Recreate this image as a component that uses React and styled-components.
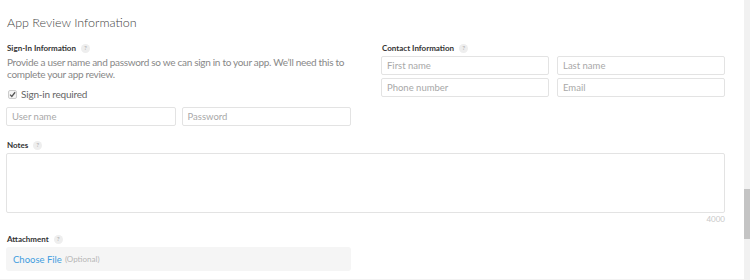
import React from "react";
import styled, { createGlobalStyle } from "styled-components";

const Global = createGlobalStyle`
  html, body { margin: 0; padding: 0; background: #fff; }
  body { font-family: "Lato", "Liberation Sans", sans-serif; }
  * { box-sizing: border-box; }
`;

const Page = styled.div`
  display: flex;
  width: 750px;
  height: 280px;
  overflow: hidden;
`;

const Content = styled.div`
  flex: 1;
  padding: 13px 19px 0 6px;
  border-bottom: 1px solid #f2f2f2;
`;

const Track = styled.div`
  width: 6px;
  background: #f1f1f1;
  padding-top: 189px;
`;

const Thumb = styled.div`
  height: 50px;
  background: #c4c4c4;
`;

const Heading = styled.h2`
  margin: 0 0 0 1px;
  font-size: 12.5px;
  line-height: 20px;
  font-weight: 300;
  color: #444;
`;

const Columns = styled.div`
  display: grid;
  grid-template-columns: 345px 344px;
  column-gap: 30px;
  margin-top: 9px;
`;

const Col = styled.div`
  display: flex;
  flex-direction: column;
`;

const Label = styled.div`
  display: flex;
  align-items: center;
  gap: 5px;
  margin-left: 1px;
  font-size: 8px;
  line-height: 12px;
  font-weight: 700;
  color: #333;
`;

const Help = styled.span`
  display: inline-flex;
  align-items: center;
  justify-content: center;
  width: 9px;
  height: 9px;
  border-radius: 50%;
  background: #eee;
  color: #aaa;
  font-size: 6.5px;
  font-weight: 400;
`;

const Desc = styled.p`
  margin: 2px 0 0 1px;
  font-size: 10px;
  letter-spacing: -0.3px;
  line-height: 12px;
  color: #888;
`;

const Check = styled.label`
  display: flex;
  align-items: center;
  gap: 4px;
  margin: 8px 0 0 2px;
  font-size: 10px;
  letter-spacing: -0.2px;
  color: #666;
`;

const Box = styled.span`
  width: 9px;
  height: 9px;
  border: 1px solid #ccc;
  border-radius: 2px;
  background: #f4f4f4;
  display: inline-flex;
  align-items: center;
  justify-content: center;
`;

const Row = styled.div`
  display: grid;
  grid-template-columns: 1fr 1fr;
  column-gap: ${p => p.$gap}px;
  row-gap: 3px;
  margin-top: ${p => p.$top || 0}px;
`;

const Input = styled.div`
  height: 19px;
  border: 1px solid #e3e3e3;
  border-radius: 2px;
  padding: 0 5px;
  display: flex;
  align-items: center;
  font-size: 9.5px;
  color: #a8a8a8;
`;

const Section = styled.div`
  display: flex;
  flex-direction: column;
  margin-top: ${p => p.$top}px;
`;

const TextArea = styled.div`
  height: 60px;
  margin-top: 2px;
  border: 1px solid #e3e3e3;
  border-radius: 2px;
`;

const Count = styled.div`
  text-align: right;
  font-size: 8px;
  line-height: 12px;
  color: #c8c8c8;
`;

const FileBox = styled.div`
  width: 345px;
  height: 24px;
  margin-top: 2px;
  border-radius: 3px;
  background: #f5f5f5;
  display: flex;
  align-items: center;
  gap: 3px;
  padding-left: 7px;
`;

const FileLink = styled.span`
  font-size: 9.5px;
  color: #3f9ddf;
`;

const Optional = styled.span`
  font-size: 8px;
  color: #b5b5b5;
`;

export default function App() {
  return (
    <Page>
      <Global />
      <Content>
        <Heading>App Review Information</Heading>
        <Columns>
          <Col>
            <Label>Sign-In Information <Help>?</Help></Label>
            <Desc>
              Provide a user name and password so we can sign in to your app. We’ll need this to
              complete your app review.
            </Desc>
            <Check>
              <Box>
                <svg width="7" height="7" viewBox="0 0 10 10">
                  <path d="M1.5 5.2 L4 7.8 L8.8 1.8" fill="none" stroke="#555" strokeWidth="1.8" />
                </svg>
              </Box>
              Sign-in required
            </Check>
            <Row $gap={6} $top={7}>
              <Input>User name</Input>
              <Input>Password</Input>
            </Row>
          </Col>
          <Col>
            <Label>Contact Information <Help>?</Help></Label>
            <Row $gap={8} $top={2}>
              <Input>First name</Input>
              <Input>Last name</Input>
              <Input>Phone number</Input>
              <Input>Email</Input>
            </Row>
          </Col>
        </Columns>
        <Section $top={13}>
          <Label>Notes <Help>?</Help></Label>
          <TextArea />
          <Count>4000</Count>
        </Section>
        <Section $top={8}>
          <Label>Attachment <Help>?</Help></Label>
          <FileBox>
            <FileLink>Choose File</FileLink>
            <Optional>(Optional)</Optional>
          </FileBox>
        </Section>
      </Content>
      <Track>
        <Thumb />
      </Track>
    </Page>
  );
}
